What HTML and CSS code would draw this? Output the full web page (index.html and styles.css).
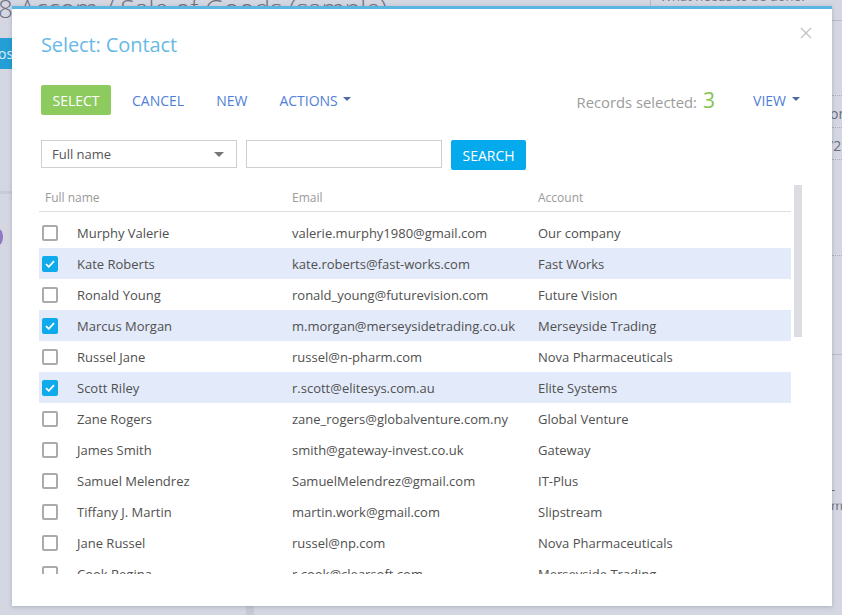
FILE: index.html
```html
<!DOCTYPE html>
<html lang="en">
<head>
<meta charset="utf-8">
<title>Select: Contact</title>
<link rel="stylesheet" href="styles.css">
</head>
<body>
<div class="backdrop">
  <div class="bg-title">8 Accom / Sale of Goods (sample)</div>
  <div class="bg-btn">os</div>
  <div class="bg-band"></div>
  <div class="bg-dot"></div>
  <div class="bg-vline"></div>
  <div class="bg-top-text">What needs to be done?</div>
  <div class="bg-hline h20"></div>
  <div class="bg-dotted d95"></div>
  <div class="bg-frag f115">on</div>
  <div class="bg-dotted d127"></div>
  <div class="bg-frag f147">/2</div>
  <div class="bg-dotted d159"></div>
  <div class="bg-dotted d255"></div>
  <div class="bg-hline h354"></div>
  <div class="bg-frag f490">-m</div>
  <div class="bg-hline h503"></div>
  <div class="bg-strip"></div>
</div>

<div class="modal">
  <button class="close" aria-label="Close">
    <svg width="12" height="12" viewBox="0 0 12 12"><path d="M1 1L11 11M11 1L1 11" stroke="#c2c2c2" stroke-width="1.3" fill="none"/></svg>
  </button>
  <h1 class="title">Select: Contact</h1>

  <div class="toolbar">
    <div class="actions">
      <button class="btn-select">SELECT</button>
      <button class="btn-link">CANCEL</button>
      <button class="btn-link">NEW</button>
      <button class="btn-link">ACTIONS<span class="caret"></span></button>
    </div>
    <div class="right">
      <span class="records">Records selected: <span class="count">3</span></span>
      <button class="btn-link">VIEW<span class="caret"></span></button>
    </div>
  </div>

  <div class="search">
    <div class="combo">Full name<span class="combo-caret"></span></div>
    <div class="input"></div>
    <button class="btn-search">SEARCH</button>
  </div>

  <div class="grid">
    <div class="head">
      <div class="hc first">Full name</div>
      <div class="hc">Email</div>
      <div class="hc">Account</div>
    </div>
    <div class="list">
      <div class="row"><div class="c1"><span class="cb"></span>Murphy Valerie</div><div>valerie.murphy1980@gmail.com</div><div>Our company</div></div>
      <div class="row sel"><div class="c1"><span class="cb on"><svg width="10" height="8" viewBox="0 0 10 8"><path d="M1 4.2L3.8 6.8L9 1.2" stroke="#fff" stroke-width="1.8" fill="none"/></svg></span>Kate Roberts</div><div>kate.roberts@fast-works.com</div><div>Fast Works</div></div>
      <div class="row"><div class="c1"><span class="cb"></span>Ronald Young</div><div>ronald_young@futurevision.com</div><div>Future Vision</div></div>
      <div class="row sel"><div class="c1"><span class="cb on"><svg width="10" height="8" viewBox="0 0 10 8"><path d="M1 4.2L3.8 6.8L9 1.2" stroke="#fff" stroke-width="1.8" fill="none"/></svg></span>Marcus Morgan</div><div>m.morgan@merseysidetrading.co.uk</div><div>Merseyside Trading</div></div>
      <div class="row"><div class="c1"><span class="cb"></span>Russel Jane</div><div>russel@n-pharm.com</div><div>Nova Pharmaceuticals</div></div>
      <div class="row sel"><div class="c1"><span class="cb on"><svg width="10" height="8" viewBox="0 0 10 8"><path d="M1 4.2L3.8 6.8L9 1.2" stroke="#fff" stroke-width="1.8" fill="none"/></svg></span>Scott Riley</div><div>r.scott@elitesys.com.au</div><div>Elite Systems</div></div>
      <div class="row"><div class="c1"><span class="cb"></span>Zane Rogers</div><div>zane_rogers@globalventure.com.ny</div><div>Global Venture</div></div>
      <div class="row"><div class="c1"><span class="cb"></span>James Smith</div><div>smith@gateway-invest.co.uk</div><div>Gateway</div></div>
      <div class="row"><div class="c1"><span class="cb"></span>Samuel Melendrez</div><div>SamuelMelendrez@gmail.com</div><div>IT-Plus</div></div>
      <div class="row"><div class="c1"><span class="cb"></span>Tiffany J. Martin</div><div>martin.work@gmail.com</div><div>Slipstream</div></div>
      <div class="row"><div class="c1"><span class="cb"></span>Jane Russel</div><div>russel@np.com</div><div>Nova Pharmaceuticals</div></div>
      <div class="row"><div class="c1"><span class="cb"></span>Cook Regina</div><div>r.cook@clearsoft.com</div><div>Merseyside Trading</div></div>
    </div>
    <div class="scrollbar"></div>
  </div>
</div>
</body>
</html>
```

FILE: styles.css
```css
* { box-sizing: border-box; }
html, body { margin: 0; padding: 0; }
body {
  width: 842px;
  height: 615px;
  overflow: hidden;
  background: #d4d6e1;
  font-family: "Open Sans", "Liberation Sans", sans-serif;
  position: relative;
}

/* ---------- dimmed page behind the dialog ---------- */
.backdrop { position: absolute; inset: 0; }
.bg-title {
  position: absolute; left: -2px; top: -5px;
  font-size: 26px; line-height: 26px; font-weight: 300;
  color: #6f7180; white-space: nowrap;
}
.bg-btn {
  position: absolute; left: -10px; top: 38px; width: 30px; height: 31px;
  background: #239fd6; color: #e4eef6; font-size: 14px; line-height: 31px;
  padding-left: 8px;
}
.bg-band { position: absolute; left: 0; top: 191px; width: 12px; height: 3px; background: #c8cad6; }
.bg-dot { position: absolute; left: -6px; top: 229px; width: 9px; height: 16px; border-radius: 50%; background: #8f78c4; }
.bg-vline { position: absolute; left: 650px; top: 0; width: 1px; height: 8px; background: #b8bac8; }
.bg-top-text { position: absolute; left: 660px; top: -13px; font-size: 13px; line-height: 18px; color: #777987; white-space: nowrap; }
.bg-hline { position: absolute; left: 832px; width: 10px; height: 1px; background: #b9bbc9; }
.h20 { top: 20px; } .h354 { top: 354px; } .h503 { top: 503px; }
.bg-dotted { position: absolute; left: 832px; width: 10px; border-top: 1px dotted #aeb0bd; }
.d95 { top: 95px; } .d127 { top: 127px; } .d159 { top: 159px; } .d255 { top: 255px; }
.bg-frag { position: absolute; left: 830px; font-size: 14px; line-height: 16px; color: #6b6d7b; }
.f115 { top: 106px; } .f147 { top: 138px; left: 828px; } .f490 { top: 481px; left: 831px; font-size: 13px; }
.bg-strip { position: absolute; left: 246px; top: 606px; width: 8px; height: 9px; background: #c6c8d4; }

/* ---------- dialog ---------- */
.modal {
  position: absolute;
  left: 12px; top: 6px;
  width: 820px; height: 600px;
  background: #fff;
  border-top: 3px solid #5cb6e2;
  box-shadow: 0 1px 4px rgba(60, 64, 90, 0.25);
  padding: 22px 32px 0 29px;
}
.close {
  position: absolute; right: 19px; top: 17px;
  width: 14px; height: 14px; padding: 1px;
  border: 0; background: none; display: flex;
}
.title {
  margin: 0;
  font-size: 20px; line-height: 28px; font-weight: 400;
  color: #68b9e6;
  letter-spacing: -0.1px;
}

.toolbar {
  margin-top: 26px;
  height: 30px;
  display: flex; align-items: center; justify-content: space-between;
}
.actions, .right { display: flex; align-items: center; }
button { font-family: inherit; cursor: pointer; }
.btn-select {
  height: 30px; width: 70px; padding: 0;
  border: 0; border-radius: 2px;
  background: #8ecb5f; color: #fff;
  font-size: 14px;
  margin-right: 21px;
}
.btn-link {
  border: 0; background: none; padding: 0;
  color: #4f80d8; font-size: 14px; height: 30px;
  display: flex; align-items: center;
  margin-right: 32px;
}
.actions .btn-link:last-child, .right .btn-link { margin-right: 0; }
.caret {
  display: inline-block; margin-left: 5px; margin-top: -2px;
  border-left: 4px solid transparent; border-right: 4px solid transparent;
  border-top: 4px solid #4d6ba6;
}
.right .caret { margin-left: 6px; }
.records { color: #9b9b9b; font-size: 14.8px; margin-right: 38px; display: flex; align-items: baseline; }
.count { color: #84c44f; font-size: 21px; margin-left: 6px; }

.search { margin-top: 25px; display: flex; gap: 9px; align-items: flex-start; }
.combo, .input {
  width: 196px; height: 28px;
  border: 1px solid #cfcfcf;
}
.combo {
  display: flex; align-items: center; justify-content: space-between;
  padding: 0 12px 0 10px;
  font-size: 13px; color: #555;
}
.combo-caret {
  border-left: 5px solid transparent; border-right: 5px solid transparent;
  border-top: 5px solid #777;
}
.btn-search {
  height: 30px; width: 75px; padding: 0;
  border: 0; border-radius: 2px;
  background: #05aaec; color: #fff; font-size: 14px;
}

.grid { position: relative; margin-left: -2px; width: 752px; }
.head {
  margin-top: 19px;
  display: grid; grid-template-columns: 253px 246px 1fr;
  border-bottom: 1px solid #dedede;
  padding-bottom: 4px;
}
.hc { font-size: 12px; line-height: 18px; color: #9a9a9a; }
.hc.first { padding-left: 6px; }
.list { height: 362px; overflow: hidden; padding-top: 5px; }
.row {
  display: grid; grid-template-columns: 253px 246px 1fr;
  height: 31px; align-items: center;
  font-size: 13px; color: #505050;
  white-space: nowrap;
}
.row.sel { background: #e3eafa; }
.c1 { display: flex; align-items: center; padding-left: 3px; }
.cb {
  width: 16px; height: 16px; flex: none;
  border: 2px solid #ababab; border-radius: 2px;
  margin-right: 19px;
  display: flex; align-items: center; justify-content: center;
}
.cb.on { border: 0; background: #0eaaec; }
.scrollbar {
  position: absolute; left: 755px; top: -4px;
  width: 8px; height: 152px; background: #dcdde2;
}
```
